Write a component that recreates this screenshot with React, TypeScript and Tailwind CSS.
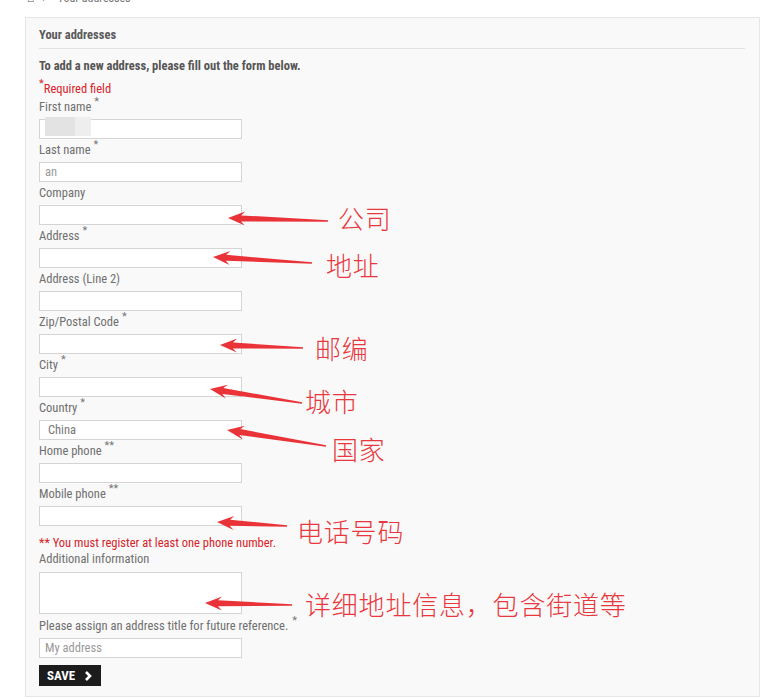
import type { ReactNode } from "react";

// Address form with red annotation arrows over it
const FONT = "font-['Roboto_Condensed','Liberation_Sans_Narrow','Arial_Narrow',Roboto,sans-serif] [font-stretch:condensed]";

type Arrow = { tip: [number, number]; tail: [number, number] };

const arrows: Arrow[] = [
  { tip: [228, 218], tail: [328, 221] },
  { tip: [213, 257], tail: [312, 263] },
  { tip: [220, 345], tail: [303, 348] },
  { tip: [210, 389], tail: [302, 403] },
  { tip: [227, 430], tail: [326, 446] },
  { tip: [217, 522], tail: [287, 526] },
  { tip: [205, 603], tail: [292, 605] },
];

const notes = [
  { text: "公司", x: 338, y: 205 },
  { text: "地址", x: 326, y: 252 },
  { text: "邮编", x: 315, y: 335 },
  { text: "城市", x: 305, y: 388 },
  { text: "国家", x: 332, y: 436 },
  { text: "电话号码", x: 297, y: 518 },
  { text: "详细地址信息，包含街道等", x: 305, y: 591 },
];

function arrowPoints({ tip, tail }: Arrow) {
  const dx = tail[0] - tip[0];
  const dy = tail[1] - tip[1];
  const len = Math.hypot(dx, dy);
  const d = [dx / len, dy / len];
  const n = [-d[1], d[0]];
  const at = (along: number, side: number, from = tip) =>
    `${from[0] + d[0] * along + n[0] * side},${from[1] + d[1] * along + n[1] * side}`;
  return [
    at(0, 0),
    at(17, 7),
    at(13, 3),
    at(0, 0.7, tail),
    at(0, -0.7, tail),
    at(13, -3),
    at(17, -7),
  ].join(" ");
}

function Star({ n = 1, gap = "ml-[3px]" }: { n?: number; gap?: string }) {
  return (
    <span className={`${gap} relative -top-[6px] text-[11px] text-[#777]`}>{"*".repeat(n)}</span>
  );
}

function Field({ label, stars = 0, children }: { label: string; stars?: number; children?: ReactNode }) {
  return (
    <div className="mb-[3px]">
      <div className="h-4 leading-4 text-[12.5px] text-[#6f6f6f]">
        {label}
        {stars > 0 && <Star n={stars} />}
      </div>
      <div className="mt-1">{children ?? <Box />}</div>
    </div>
  );
}

function Box({ children, h = "h-5" }: { children?: ReactNode; h?: string }) {
  return (
    <div className={`relative ${h} w-[203px] border border-[#d4d4d4] bg-white flex items-center text-[12.5px]`}>
      {children}
    </div>
  );
}

export default function App() {
  return (
    <div className={`relative w-[770px] h-[699px] bg-white overflow-hidden ${FONT}`}>
      {/* Breadcrumb — mostly cut off at the top */}
      <div className="h-[17px] overflow-hidden">
        <div className="-mt-[11px] ml-[27px] flex items-center gap-2 text-[12px] text-[#777]">
          <span className="text-[#555]">⌂</span>
          <span>›</span>
          <span className="ml-1">Your addresses</span>
        </div>
      </div>

      {/* Panel */}
      <div className="ml-[25px] w-[735px] h-[680px] border border-[#e6e6e6] bg-[#f9f9f9] px-[13px] pt-[9px]">
        <div className="h-4 leading-4 text-[12.5px] font-bold text-[#5a5a5a]">Your addresses</div>
        <div className="mt-[5px] mr-[1px] border-b border-[#e2e2e2]" />

        <div className="mt-[9px] h-4 leading-4 text-[12.5px] font-bold text-[#555]">
          To add a new address, please fill out the form below.
        </div>
        <div className="mt-[7px] h-4 leading-4 text-[12.5px] text-[#d8232a]">
          <span className="relative -top-[6px] text-[11px]">*</span>Required field
        </div>

        <div className="mt-[2px]">
          <Field label="First name" stars={1}>
            <Box>
              <div className="absolute left-[5px] -top-[3px] h-[19px] w-[30px] bg-[#e3e3e3]" />
              <div className="absolute left-[35px] -top-[3px] h-[19px] w-[16px] bg-[#eeeeee]" />
            </Box>
          </Field>
          <Field label="Last name" stars={1}>
            <Box>
              <span className="pl-[5px] text-[#999]">an</span>
            </Box>
          </Field>
          <Field label="Company" />
          <Field label="Address" stars={1} />
          <Field label="Address (Line 2)" />
          <Field label="Zip/Postal Code" stars={1} />
          <Field label="City" stars={1} />
          <Field label="Country" stars={1}>
            <Box>
              <span className="pl-[8px] text-[#777]">China</span>
            </Box>
          </Field>
          <Field label="Home phone" stars={2} />
          <Field label="Mobile phone" stars={2} />
        </div>

        <div className="mt-[9px] h-4 leading-4 text-[12.5px] text-[#d8232a]">
          ** You must register at least one phone number.
        </div>
        <div className="h-4 leading-4 text-[12.5px] text-[#6f6f6f]">Additional information</div>
        <div className="mt-[5px]">
          <Box h="h-[42px]" />
        </div>
        <div className="mt-[4px] h-4 leading-4 text-[12.5px] text-[#6f6f6f]">
          Please assign an address title for future reference.
          <Star gap="ml-[4px]" />
        </div>
        <div className="mt-1">
          <Box>
            <span className="pl-[5px] text-[#999]">My address</span>
          </Box>
        </div>
        <button className="mt-[7px] h-[21px] w-[62px] bg-[#1c1c1c] text-white flex items-center pl-[8px] gap-[9px]">
          <span className="text-[13px] font-bold leading-none">SAVE</span>
          <svg width="8" height="10" viewBox="0 0 8 10">
            <path d="M2 1l4 4-4 4" fill="none" stroke="#fff" strokeWidth="2.6" />
          </svg>
        </button>
      </div>

      {/* Annotations */}
      <svg className="absolute left-0 top-0 pointer-events-none" width="770" height="699">
        {arrows.map((a, i) => (
          <polygon key={i} points={arrowPoints(a)} fill="#ea3338" />
        ))}
      </svg>
      {notes.map((n) => (
        <div
          key={n.text}
          className="absolute text-[26px] leading-[26px] tracking-[0.8px] text-[#e8383d] font-['Noto_Sans_CJK_SC',sans-serif] font-light whitespace-nowrap"
          style={{ left: n.x, top: n.y }}
        >
          {n.text}
        </div>
      ))}
    </div>
  );
}
